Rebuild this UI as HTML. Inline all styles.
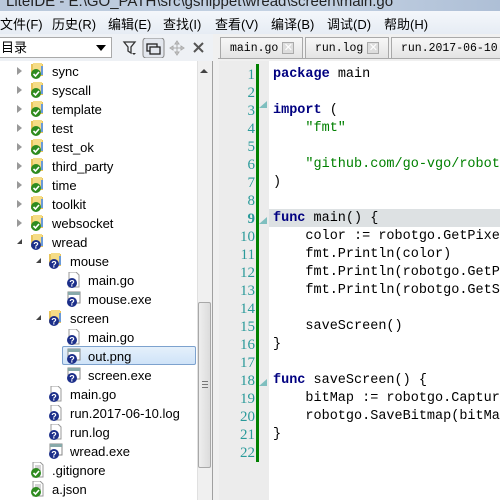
<!DOCTYPE html>
<html><head><meta charset="utf-8"><style>
*{margin:0;padding:0;box-sizing:border-box}
html,body{width:500px;height:500px;overflow:hidden}
body{background:#f0f0f0;font-family:"Liberation Sans","Noto Sans CJK SC",sans-serif;position:relative}
#wrap{position:absolute;left:0;top:0;width:500px;height:500px;overflow:hidden}
.abs{position:absolute}
#title{left:0;top:0;width:500px;height:11px;background:linear-gradient(90deg,#b9c8db,#c5d3e4 60%,#aebfd6);overflow:hidden}
#title span{position:absolute;left:6px;top:-7px;font-size:15px;color:#222;white-space:nowrap}
#menu{left:0;top:11px;width:500px;height:23px;background:linear-gradient(#f4f7fb,#e6ecf4)}
#menu span{position:absolute;top:3px;font-size:13px;color:#000;white-space:nowrap}
#left{left:0;top:34px;width:213px;height:466px;background:#fff;border-right:1px solid #a0a0a0}
#toolbar{left:0;top:34px;width:213px;height:27px;background:#eef1f5}
#combo{left:-2px;top:37px;width:114px;height:21px;border:1px solid #aaa;background:#fff;font-size:13px;padding-left:2px;line-height:19px}
.row{position:absolute;height:19px;font-size:13px;color:#000;line-height:19px;white-space:nowrap}
.row svg{position:absolute;top:1px}
.row .t{position:absolute;top:0}
#sb{left:197px;top:61px;width:15px;height:439px;background:#f0f0f0;border-left:1px solid #e0e0e0}
#thumb{left:198px;top:302px;width:13px;height:166px;border:1px solid #a8a8a8;border-radius:2px;background:linear-gradient(90deg,#eee,#dcdcdc)}
#edit{left:214px;top:34px;width:286px;height:466px;background:#f0f0f0}
#tabs{left:218px;top:37px;width:282px;height:21px;overflow:hidden}
.tab{position:absolute;top:0;height:21px;border:1px solid #a9a9a9;border-bottom:none;background:linear-gradient(#f7f7f7,#e4e4e4);font-family:"Liberation Mono",monospace;font-size:11.5px;line-height:21px;padding-left:9px;white-space:nowrap;overflow:hidden}
.x{display:inline-block;width:12px;height:12px;border:1px solid #aaa;background:#ddd;color:#fff;font-size:11px;line-height:10px;text-align:center;vertical-align:middle;margin-left:4px;font-family:"Liberation Sans",sans-serif}
#gutter{left:219px;top:61px;width:50px;height:439px;background:#ececec}
#green{left:256px;top:64px;width:3px;height:398px;background:#008000}
#code{left:269px;top:61px;width:231px;height:439px;background:#fff;overflow:hidden}
.ln{position:absolute;left:219px;width:36px;text-align:right;font-family:"Liberation Serif",serif;font-size:15px;color:#2a9a9a;line-height:18px}
.cl{position:absolute;left:4px;font-family:"Liberation Mono",monospace;font-size:13.5px;line-height:18px;color:#000;white-space:pre}
.k{color:#000080;font-weight:bold}
.s{color:#008000}
</style></head><body><div id="wrap">
<div id="title" class="abs"><span>LiteIDE - E:\GO_PATH\src\gsnippet\wread\screen\main.go</span></div>
<div id="menu" class="abs">
<span style="left:0">文件(F)</span><span style="left:52px">历史(R)</span><span style="left:108px">编辑(E)</span><span style="left:163px">查找(I)</span><span style="left:215px">查看(V)</span><span style="left:271px">编译(B)</span><span style="left:327px">调试(D)</span><span style="left:384px">帮助(H)</span>
</div>
<div id="left" class="abs"></div>
<div id="toolbar" class="abs"></div>
<div id="combo" class="abs">目录<span style="position:absolute;right:5px;top:7px;border-left:5px solid transparent;border-right:5px solid transparent;border-top:6px solid #000"></span></div>
<svg class="abs" style="left:118px;top:38px" width="95" height="20">
<path d="M6 4h11l-4 5v6l-3-2V9z" fill="none" stroke="#333" stroke-width="1.3"/><path d="M14 15h4l-2 2z" fill="#333"/>
<rect x="25" y="0" width="21" height="20" rx="3" fill="#e3e7ee" stroke="#888"/>
<rect x="29" y="6" width="10" height="7" fill="none" stroke="#222" stroke-width="1.3"/><rect x="32" y="9" width="10" height="7" fill="#e3e7ee" stroke="#222" stroke-width="1.3"/>
<g stroke="#aaa" fill="none"><path d="M59 3v14M52 10h14"/><path d="M59 3l-2 3h4zM59 17l-2-3h4zM52 10l3-2v4zM66 10l-3-2v4z" fill="#ccc"/></g>
<path d="M76 5l9 9M85 5l-9 9" stroke="#555" stroke-width="2"/>
</svg>
<div id="sb" class="abs"></div>
<div class="abs" style="left:200px;top:69px;border-left:4px solid transparent;border-right:4px solid transparent;border-bottom:4px solid #444"></div>
<div id="thumb" class="abs"><div style="position:absolute;left:3px;top:78px;width:6px;height:7px;border-top:1px solid #777;border-bottom:1px solid #777"><div style="margin-top:2px;border-top:1px solid #777"></div></div></div>

<div class="abs" style="left:62px;top:346px;width:134px;height:19px;background:linear-gradient(#e5f0fb,#cfe3f8);border:1px solid #7da2ce;border-radius:2px"></div>

<svg width="0" height="0" style="position:absolute"><defs>
<g id="gf"><rect x="1" y="1" width="12" height="12" fill="#e8c45a"/><rect x="3" y="0" width="9" height="12" fill="#f5dc86"/><rect x="11" y="3" width="2" height="9" fill="#6a9ad8"/><circle cx="6" cy="11" r="5" fill="#2e8b1f"/><path d="M3.5 11l2 2 3.5-4" stroke="#fff" stroke-width="1.6" fill="none"/></g>
<g id="qf"><rect x="1" y="1" width="12" height="12" fill="#e8c45a"/><rect x="3" y="0" width="9" height="12" fill="#f5dc86"/><rect x="11" y="3" width="2" height="9" fill="#6a9ad8"/><circle cx="6" cy="11" r="5" fill="#1c2f8a"/><text x="6" y="14.5" font-size="9" font-weight="bold" fill="#fff" text-anchor="middle" font-family="Liberation Sans">?</text></g>
<g id="qd"><path d="M3 0h7l3 3v12H3z" fill="#fff" stroke="#999"/><circle cx="6" cy="11" r="5" fill="#1c2f8a"/><text x="6" y="14.5" font-size="9" font-weight="bold" fill="#fff" text-anchor="middle" font-family="Liberation Sans">?</text></g>
<g id="qe"><rect x="2" y="1" width="12" height="11" fill="#fff" stroke="#888"/><rect x="2" y="1" width="12" height="3" fill="#8aa"/><circle cx="6" cy="11" r="5" fill="#1c2f8a"/><text x="6" y="14.5" font-size="9" font-weight="bold" fill="#fff" text-anchor="middle" font-family="Liberation Sans">?</text></g>
<g id="gd"><path d="M3 0h7l3 3v12H3z" fill="#fff" stroke="#999"/><path d="M5 4h6M5 6h6M5 8h6" stroke="#aaa"/><circle cx="6" cy="11" r="5" fill="#2e8b1f"/><path d="M3.5 11l2 2 3.5-4" stroke="#fff" stroke-width="1.6" fill="none"/></g>
</defs></svg>

<div class="row" style="left:0;top:62px"><span style="position:absolute;left:17px;top:5px;border-top:4px solid transparent;border-bottom:4px solid transparent;border-left:5px solid #999"></span><svg style="left:30px" width="15" height="17"><use href="#gf"/></svg><span class="t" style="left:52px">sync</span></div>
<div class="row" style="left:0;top:81px"><span style="position:absolute;left:17px;top:5px;border-top:4px solid transparent;border-bottom:4px solid transparent;border-left:5px solid #999"></span><svg style="left:30px" width="15" height="17"><use href="#gf"/></svg><span class="t" style="left:52px">syscall</span></div>
<div class="row" style="left:0;top:100px"><span style="position:absolute;left:17px;top:5px;border-top:4px solid transparent;border-bottom:4px solid transparent;border-left:5px solid #999"></span><svg style="left:30px" width="15" height="17"><use href="#gf"/></svg><span class="t" style="left:52px">template</span></div>
<div class="row" style="left:0;top:119px"><span style="position:absolute;left:17px;top:5px;border-top:4px solid transparent;border-bottom:4px solid transparent;border-left:5px solid #999"></span><svg style="left:30px" width="15" height="17"><use href="#gf"/></svg><span class="t" style="left:52px">test</span></div>
<div class="row" style="left:0;top:138px"><span style="position:absolute;left:17px;top:5px;border-top:4px solid transparent;border-bottom:4px solid transparent;border-left:5px solid #999"></span><svg style="left:30px" width="15" height="17"><use href="#gf"/></svg><span class="t" style="left:52px">test_ok</span></div>
<div class="row" style="left:0;top:157px"><span style="position:absolute;left:17px;top:5px;border-top:4px solid transparent;border-bottom:4px solid transparent;border-left:5px solid #999"></span><svg style="left:30px" width="15" height="17"><use href="#gf"/></svg><span class="t" style="left:52px">third_party</span></div>
<div class="row" style="left:0;top:176px"><span style="position:absolute;left:17px;top:5px;border-top:4px solid transparent;border-bottom:4px solid transparent;border-left:5px solid #999"></span><svg style="left:30px" width="15" height="17"><use href="#gf"/></svg><span class="t" style="left:52px">time</span></div>
<div class="row" style="left:0;top:195px"><span style="position:absolute;left:17px;top:5px;border-top:4px solid transparent;border-bottom:4px solid transparent;border-left:5px solid #999"></span><svg style="left:30px" width="15" height="17"><use href="#gf"/></svg><span class="t" style="left:52px">toolkit</span></div>
<div class="row" style="left:0;top:214px"><span style="position:absolute;left:17px;top:5px;border-top:4px solid transparent;border-bottom:4px solid transparent;border-left:5px solid #999"></span><svg style="left:30px" width="15" height="17"><use href="#gf"/></svg><span class="t" style="left:52px">websocket</span></div>
<div class="row" style="left:0;top:233px"><span style="position:absolute;left:17px;top:6px;border-left:5px solid transparent;border-bottom:5px solid #444"></span><svg style="left:30px" width="15" height="17"><use href="#qf"/></svg><span class="t" style="left:52px">wread</span></div>
<div class="row" style="left:0;top:252px"><span style="position:absolute;left:36px;top:6px;border-left:5px solid transparent;border-bottom:5px solid #444"></span><svg style="left:48px" width="15" height="17"><use href="#qf"/></svg><span class="t" style="left:70px">mouse</span></div>
<div class="row" style="left:0;top:271px"><svg style="left:66px" width="15" height="17"><use href="#qd"/></svg><span class="t" style="left:88px">main.go</span></div>
<div class="row" style="left:0;top:290px"><svg style="left:66px" width="15" height="17"><use href="#qe"/></svg><span class="t" style="left:88px">mouse.exe</span></div>
<div class="row" style="left:0;top:309px"><span style="position:absolute;left:36px;top:6px;border-left:5px solid transparent;border-bottom:5px solid #444"></span><svg style="left:48px" width="15" height="17"><use href="#qf"/></svg><span class="t" style="left:70px">screen</span></div>
<div class="row" style="left:0;top:328px"><svg style="left:66px" width="15" height="17"><use href="#qd"/></svg><span class="t" style="left:88px">main.go</span></div>
<div class="row" style="left:0;top:347px"><svg style="left:66px" width="15" height="17"><use href="#qe"/></svg><span class="t" style="left:88px">out.png</span></div>
<div class="row" style="left:0;top:366px"><svg style="left:66px" width="15" height="17"><use href="#qe"/></svg><span class="t" style="left:88px">screen.exe</span></div>
<div class="row" style="left:0;top:385px"><svg style="left:48px" width="15" height="17"><use href="#qd"/></svg><span class="t" style="left:70px">main.go</span></div>
<div class="row" style="left:0;top:404px"><svg style="left:48px" width="15" height="17"><use href="#qd"/></svg><span class="t" style="left:70px">run.2017-06-10.log</span></div>
<div class="row" style="left:0;top:423px"><svg style="left:48px" width="15" height="17"><use href="#qd"/></svg><span class="t" style="left:70px">run.log</span></div>
<div class="row" style="left:0;top:442px"><svg style="left:48px" width="15" height="17"><use href="#qe"/></svg><span class="t" style="left:70px">wread.exe</span></div>
<div class="row" style="left:0;top:461px"><svg style="left:30px" width="15" height="17"><use href="#gd"/></svg><span class="t" style="left:52px">.gitignore</span></div>
<div class="row" style="left:0;top:480px"><svg style="left:30px" width="15" height="17"><use href="#gd"/></svg><span class="t" style="left:52px">a.json</span></div>

<div id="edit" class="abs"></div>
<div id="tabs" class="abs">
<div class="tab" style="left:2px;width:83px">main.go<span class="x">✕</span></div>
<div class="tab" style="left:87px;width:84px">run.log<span class="x">✕</span></div>
<div class="tab" style="left:173px;width:112px">run.2017-06-10.log</div>
</div>
<div class="abs" style="left:218px;top:58px;width:282px;height:3px;background:#f0f0f0;border-top:1px solid #a9a9a9"></div>
<div id="gutter" class="abs"></div>
<div id="code" class="abs">
<div style="position:absolute;left:0;top:148px;width:231px;height:18px;background:#dde1e3"></div>
<div class="cl" style="top:5px"><span class="k">package</span> main</div>
<div class="cl" style="top:41px"><span class="k">import</span> (</div>
<div class="cl" style="top:59px">    <span class="s">"fmt"</span></div>
<div class="cl" style="top:95px">    <span class="s">"github.com/go-vgo/robotgo"</span></div>
<div class="cl" style="top:113px">)</div>
<div class="cl" style="top:149px"><span class="k">func</span> main() {</div>
<div class="cl" style="top:167px">    color := robotgo.GetPixelColor(100, 200)</div>
<div class="cl" style="top:185px">    fmt.Println(color)</div>
<div class="cl" style="top:203px">    fmt.Println(robotgo.GetPixelColor(10, 20))</div>
<div class="cl" style="top:221px">    fmt.Println(robotgo.GetScreenSize())</div>
<div class="cl" style="top:257px">    saveScreen()</div>
<div class="cl" style="top:275px">}</div>
<div class="cl" style="top:311px"><span class="k">func</span> saveScreen() {</div>
<div class="cl" style="top:329px">    bitMap := robotgo.CaptureScreen()</div>
<div class="cl" style="top:347px">    robotgo.SaveBitmap(bitMap, "out.png")</div>
<div class="cl" style="top:365px">}</div>
</div>
<div id="green" class="abs"></div>
<div class="abs" style="left:259px;top:101px;border-left:8px solid transparent;border-bottom:7px solid #7fbfbf"></div>
<div class="abs" style="left:259px;top:217px;border-left:8px solid transparent;border-bottom:7px solid #7fbfbf"></div>
<div class="abs" style="left:259px;top:379px;border-left:8px solid transparent;border-bottom:7px solid #7fbfbf"></div>

<div class="ln" style="top:66px">1</div><div class="ln" style="top:84px">2</div><div class="ln" style="top:102px">3</div><div class="ln" style="top:120px">4</div><div class="ln" style="top:138px">5</div><div class="ln" style="top:156px">6</div><div class="ln" style="top:174px">7</div><div class="ln" style="top:192px">8</div><div class="ln" style="top:210px;font-weight:bold">9</div><div class="ln" style="top:228px">10</div><div class="ln" style="top:246px">11</div><div class="ln" style="top:264px">12</div><div class="ln" style="top:282px">13</div><div class="ln" style="top:300px">14</div><div class="ln" style="top:318px">15</div><div class="ln" style="top:336px">16</div><div class="ln" style="top:354px">17</div><div class="ln" style="top:372px">18</div><div class="ln" style="top:390px">19</div><div class="ln" style="top:408px">20</div><div class="ln" style="top:426px">21</div><div class="ln" style="top:444px">22</div>
</div></body></html>
